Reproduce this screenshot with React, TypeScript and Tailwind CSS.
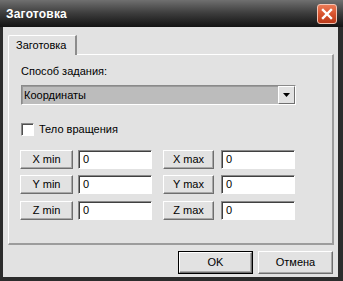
import React from 'react';

const font = { fontFamily: '"Liberation Sans", Arial, sans-serif' };

function ClassicButton({ label, className = '' }: { label: string; className?: string }) {
  return (
    <div
      className={`flex items-center justify-center bg-[#e2e2e2] border border-t-white border-l-white border-r-[#6e6e6e] border-b-[#6e6e6e] shadow-[inset_-1px_-1px_0_#a8a8a8] text-[11px] text-black ${className}`}
    >
      {label}
    </div>
  );
}

function Field({ value, className = '' }: { value: string; className?: string }) {
  return (
    <div
      className={`flex items-center bg-white border border-t-[#8a8a8a] border-l-[#8a8a8a] border-r-white border-b-white shadow-[inset_1px_1px_0_#404040] pl-[4px] text-[11px] text-black ${className}`}
    >
      {value}
    </div>
  );
}

const rows = [
  { min: 'X min', max: 'X max' },
  { min: 'Y min', max: 'Y max' },
  { min: 'Z min', max: 'Z max' },
];

export default function App() {
  return (
    <div className="w-[343px] h-[281px] bg-[#2c2c2c] flex flex-col" style={font}>
      {/* title bar */}
      <div className="h-[27px] flex items-center justify-between pl-[6px] pr-[6px] bg-gradient-to-b from-[#707070] via-[#3c3c3c] to-[#141414]">
        <span className="text-white font-bold text-[12px] tracking-[0.2px]">Заготовка</span>
        <div className="w-[20px] h-[20px] rounded-[3px] border border-[#f3c4b4] bg-gradient-to-b from-[#ec7a55] via-[#d8532e] to-[#b93a1a] flex items-center justify-center">
          <svg width="12" height="12" viewBox="0 0 12 12">
            <path d="M2 2 L10 10 M10 2 L2 10" stroke="white" strokeWidth="2.4" strokeLinecap="square" />
          </svg>
        </div>
      </div>

      {/* client area */}
      <div className="flex-1 ml-[3px] mr-[5px] mb-[4px] bg-[#e2e2e2] flex flex-col">
        <div className="pt-[8px] pl-[5px] flex">
          <div className="relative z-10 -mb-px w-[69px] h-[20px] bg-[#e2e2e2] border-t border-l border-t-white border-l-white border-r-2 border-r-[#8c8c8c] rounded-tl-[2px] flex items-center pl-[7px] text-[11px] text-black">
            Заготовка
          </div>
        </div>

        <div className="ml-[5px] w-[326px] h-[191px] border-t border-l border-t-white border-l-white border-r-2 border-b-2 border-r-[#9c9c9c] border-b-[#9c9c9c] flex flex-col pl-[12px]">
          <div className="mt-[10px] h-[13px] leading-[13px] text-[11px] text-black">Способ задания:</div>

          <div className="mt-[7px] w-[275px] h-[20px] flex border border-t-[#8a8a8a] border-l-[#8a8a8a] border-r-white border-b-white">
            <div className="flex-1 flex items-center bg-[#bcbcbc] shadow-[inset_1px_1px_0_#9a9a9a] pl-[2px] text-[11px] text-black">
              Координаты
            </div>
            <div className="w-[17px] bg-[#e2e2e2] border border-t-white border-l-white border-r-[#707070] border-b-[#707070] flex items-center justify-center">
              <svg width="7" height="4" viewBox="0 0 7 4">
                <path d="M0 0 H7 L3.5 4 Z" fill="black" />
              </svg>
            </div>
          </div>

          <div className="mt-[16px] flex items-center">
            <div className="w-[13px] h-[13px] bg-white border border-t-[#8a8a8a] border-l-[#8a8a8a] border-r-white border-b-white shadow-[inset_1px_1px_0_#505050]" />
            <span className="ml-[5px] text-[11px] text-black">Тело вращения</span>
          </div>

          <div className="mt-[12px] flex flex-col gap-[6.5px]">
            {rows.map((r) => (
              <div key={r.min} className="flex h-[19px]">
                <ClassicButton label={r.min} className="w-[53px] -ml-px" />
                <Field value="0" className="ml-[5px] w-[74px]" />
                <ClassicButton label={r.max} className="ml-[11px] w-[51px]" />
                <Field value="0" className="ml-[7px] w-[74px]" />
              </div>
            ))}
          </div>
        </div>

        <div className="mt-[6px] flex justify-end pr-[5px] gap-[5px]">
          <div className="border border-black">
            <ClassicButton label="OK" className="w-[73px] h-[21px]" />
          </div>
          <ClassicButton label="Отмена" className="w-[75px] h-[23px]" />
        </div>
      </div>
    </div>
  );
}
